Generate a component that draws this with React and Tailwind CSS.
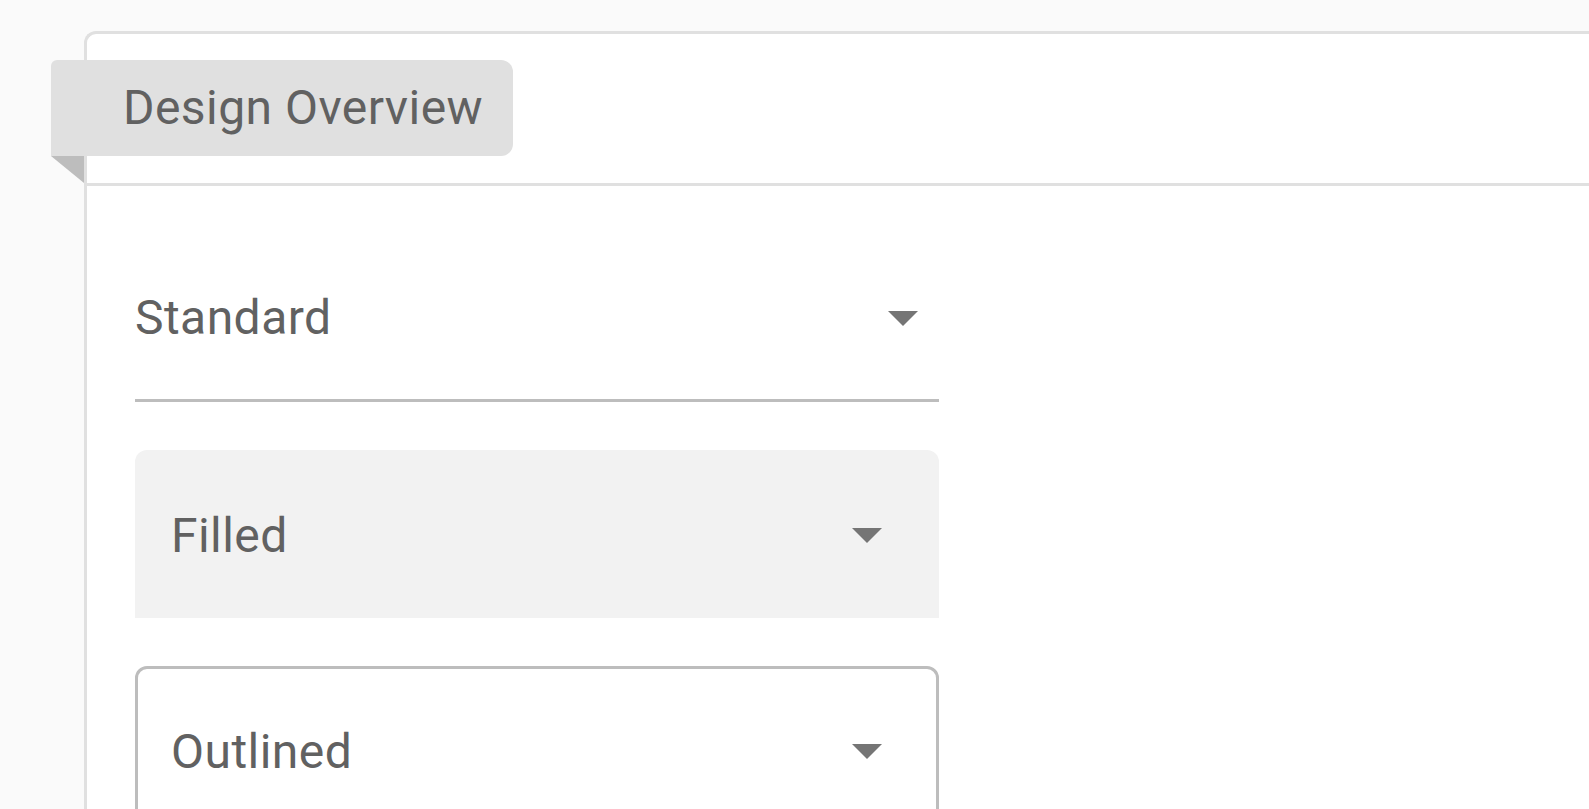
import React from "react"

function Caret() {
  return (
    <svg width="30" height="15" viewBox="0 0 30 15" className="shrink-0">
      <polygon points="0,0 30,0 15,15" fill="#757575" />
    </svg>
  )
}

export default function App() {
  return (
    <div
      className="h-screen w-screen overflow-hidden bg-[#fafafa] pt-[31px] pl-[84px] text-[#616161] tracking-[0.45px]"
      style={{ fontFamily: "Roboto, 'Noto Sans', sans-serif" }}
    >
      <div className="relative w-[1600px] h-[900px] rounded-tl-[12px] border-[3px] border-r-0 border-b-0 border-[#e0e0e0] bg-white">
        {/* header with ribbon tag */}
        <div className="h-[152px] border-b-[3px] border-[#e0e0e0]">
          <div className="absolute left-[-36px] top-[26px] flex h-[96px] w-[462px] items-center rounded-tl-[6px] rounded-r-[12px] bg-[#e0e0e0] pl-[72px] text-[48px]">
            Design Overview
          </div>
          <div className="absolute left-[-36px] top-[122px] h-0 w-0 border-t-[27px] border-l-[33px] border-t-[#bdbdbd] border-l-transparent" />
        </div>

        <div className="flex flex-col gap-12 p-12">
          {/* standard */}
          <div className="flex h-[168px] w-[804px] items-center justify-between border-b-[3px] border-[#bdbdbd] pt-[3px] text-[48px]">
            <span>Standard</span>
            <span className="mr-[21px] flex">
              <Caret />
            </span>
          </div>

          {/* filled */}
          <div className="flex h-[168px] w-[804px] items-center justify-between rounded-t-[12px] bg-[#f2f2f2] pl-[36px] pr-[57px] pt-[3px] text-[48px]">
            <span>Filled</span>
            <Caret />
          </div>

          {/* outlined */}
          <div className="flex h-[168px] w-[804px] items-center justify-between rounded-[12px] border-[3px] border-[#bdbdbd] pl-[33px] pr-[54px] pt-[3px] text-[48px]">
            <span>Outlined</span>
            <Caret />
          </div>
        </div>
      </div>
    </div>
  )
}
